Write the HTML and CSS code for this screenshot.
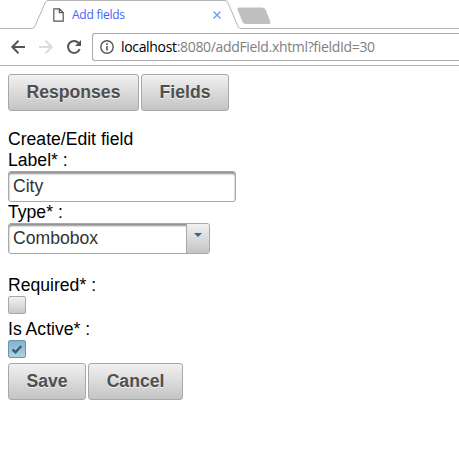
FILE: index.html
```html
<!DOCTYPE html>
<html lang="en">
<head>
<meta charset="utf-8">
<title>Add fields</title>
<link rel="stylesheet" href="styles.css">
</head>
<body>
<header class="browser">
  <div class="tabstrip">
    <svg class="tab-shape" width="459" height="29" viewBox="0 0 459 29" fill="none">
      <path d="M0 28.5H32Q34 28.5 35 26L45.500 2Q46.500 .5 48 .5H225Q227 .5 228 3L238 26.500Q239 28.500 241 28.500H459" stroke="#b5b5b5"/>
      <path d="M239 7.500H262Q264.500 7.500 265.500 9.500L270.500 22Q271 24 269 24H246Q243.500 24 242.500 22L237.500 9.500Q237 7.500 239 7.500Z" fill="#bfbfbf"/>
    </svg>
    <div class="tab">
      <svg class="page-icon" width="11" height="14" viewBox="0 0 11 14" fill="none" stroke="#555" stroke-width="1.200"><path d="M.8.800H6.500L10.200 4.500V13.200H.8ZM6.300.800V4.700H10.200"/></svg>
      <span class="tab-title">Add fields</span>
      <svg class="close" width="8" height="8" viewBox="0 0 8 8" stroke="#73a1f5" stroke-width="1.500"><path d="M.5.500L7.500 7.500M7.500.500L.5 7.500"/></svg>
    </div>
  </div>
  <div class="toolbar">
    <svg class="nav" width="82" height="20" viewBox="0 0 82 20" fill="none" stroke-width="2">
      <path d="M25 10H12.500M18.500 3.800L12.300 10L18.500 16.200" stroke="#555"/>
      <path d="M39 10H51.500M45.500 3.800L51.700 10L45.500 16.200" stroke="#dcdcdc"/>
      <path d="M79 6.500A6 6 0 1 0 79.700 12" stroke="#555"/>
      <path d="M81 3V9H75Z" fill="#555"/>
    </svg>
    <div class="address">
      <svg width="14" height="14" viewBox="0 0 14 14" fill="none" stroke="#555" stroke-width="1.400"><circle cx="7" cy="7" r="6.200"/><path d="M7 6V10.500M7 3.300V4.900" stroke-width="1.600"/></svg>
      <span class="url"><b>localhost</b>:8080/addField.xhtml?fieldId=30</span>
    </div>
  </div>
</header>
<main>
  <div class="buttons"><button class="responses">Responses</button><button class="fields">Fields</button></div>
  <form>
    <div class="line heading">Create/Edit field</div>
    <label class="line" for="label">Label* :</label>
    <input class="field" id="label" type="text" value="City">
    <div class="line">Type* :</div>
    <div class="combo"><span class="value">Combobox</span><span class="trigger"><svg width="8" height="4" viewBox="0 0 8 4"><path d="M0 0H8L4 4Z" fill="#38678a"/></svg></span></div>
    <div class="line required">Required* :</div>
    <div class="check"></div>
    <div class="line active">Is Active* :</div>
    <div class="check checked"><svg width="12" height="10" viewBox="0 0 12 10" fill="none"><path d="M1.500 5.500L4.500 8.200L10.300 2" stroke="#38607c" stroke-width="2.400"/></svg></div>
    <div class="buttons actions"><button class="save" type="button">Save</button><button class="cancel" type="button">Cancel</button></div>
  </form>
</main>
</body>
</html>
```
FILE: styles.css
```css
* { box-sizing: border-box; }
body { margin: 0; background: #fff; color: #000; font: 17.6px/21px "Liberation Sans", Arial, sans-serif; overflow: hidden; }
svg { display: block; flex: none; }
.browser { height: 66px; border-bottom: 1px solid #b2b2b2; }
.tabstrip { position: relative; height: 29px; }
.tab-shape { position: absolute; left: 0; top: 0; }
.tab { position: relative; display: flex; align-items: center; width: 221px; height: 30px; padding-left: 53px; }
.tab-title { flex: 1; margin-left: 8px; font: 12px/16px "Open Sans", sans-serif; letter-spacing: -.25px; color: #4262ff; }
.toolbar { display: flex; padding-top: 4px; }
.nav { margin-top: 4px; width: 82px; }
.address { flex: 1; display: flex; align-items: center; height: 28px; margin-left: 10px; padding-left: 7px; border: 1px solid #aaa; border-right: 0; border-radius: 3px 0 0 3px; }
.url { margin-left: 7px; font: 14px/20px "Open Sans", sans-serif; letter-spacing: -.33px; color: #808080; white-space: nowrap; }
.url b { font-weight: 400; color: #000; }
main { padding: 8px 8px 0; }
.buttons { display: flex; gap: 2px; }
button { height: 37px; padding: 0 0 2px; border: 1px solid #a8a8a8; border-radius: 3px; background: linear-gradient(#f1f1f1, #c4c4c4); color: #4f4f4f; font: bold 17.6px/20px "Liberation Sans", Arial, sans-serif; text-shadow: 0 1px 0 rgba(255,255,255,.7); }
.responses { width: 131px; }
.fields { width: 88px; }
.save { width: 78px; }
.cancel { width: 95px; }
.line { display: block; height: 21px; }
.heading { margin-top: 18px; }
.field, .combo { display: flex; height: 31px; border: 1px solid #a8a8a8; border-radius: 3px; background: #fff; box-shadow: inset 0 2px 2px #8f8f8f; color: #333; font: 17.6px/28px "Liberation Sans", Arial, sans-serif; }
.field { width: 228px; padding: 0 4px; outline: 0; }
.combo { width: 202px; }
.value { flex: 1; padding-left: 4px; }
.trigger { display: flex; justify-content: center; width: 23px; padding-top: 9px; border-left: 1px solid #a8a8a8; border-radius: 0 2px 2px 0; background: linear-gradient(#f1f1f1, #c4c4c4); }
.required { margin-top: 21px; }
.check { display: flex; align-items: center; justify-content: center; width: 18px; height: 18px; border: 1px solid #a8a8a8; border-radius: 2px; background: linear-gradient(#f1f1f1, #c9c9c9); }
.active { margin-top: 5px; }
.checked { border-color: #6595b4; background: linear-gradient(#85b2cb, #b0d0e0); }
.actions { margin-top: 5px; }
```
